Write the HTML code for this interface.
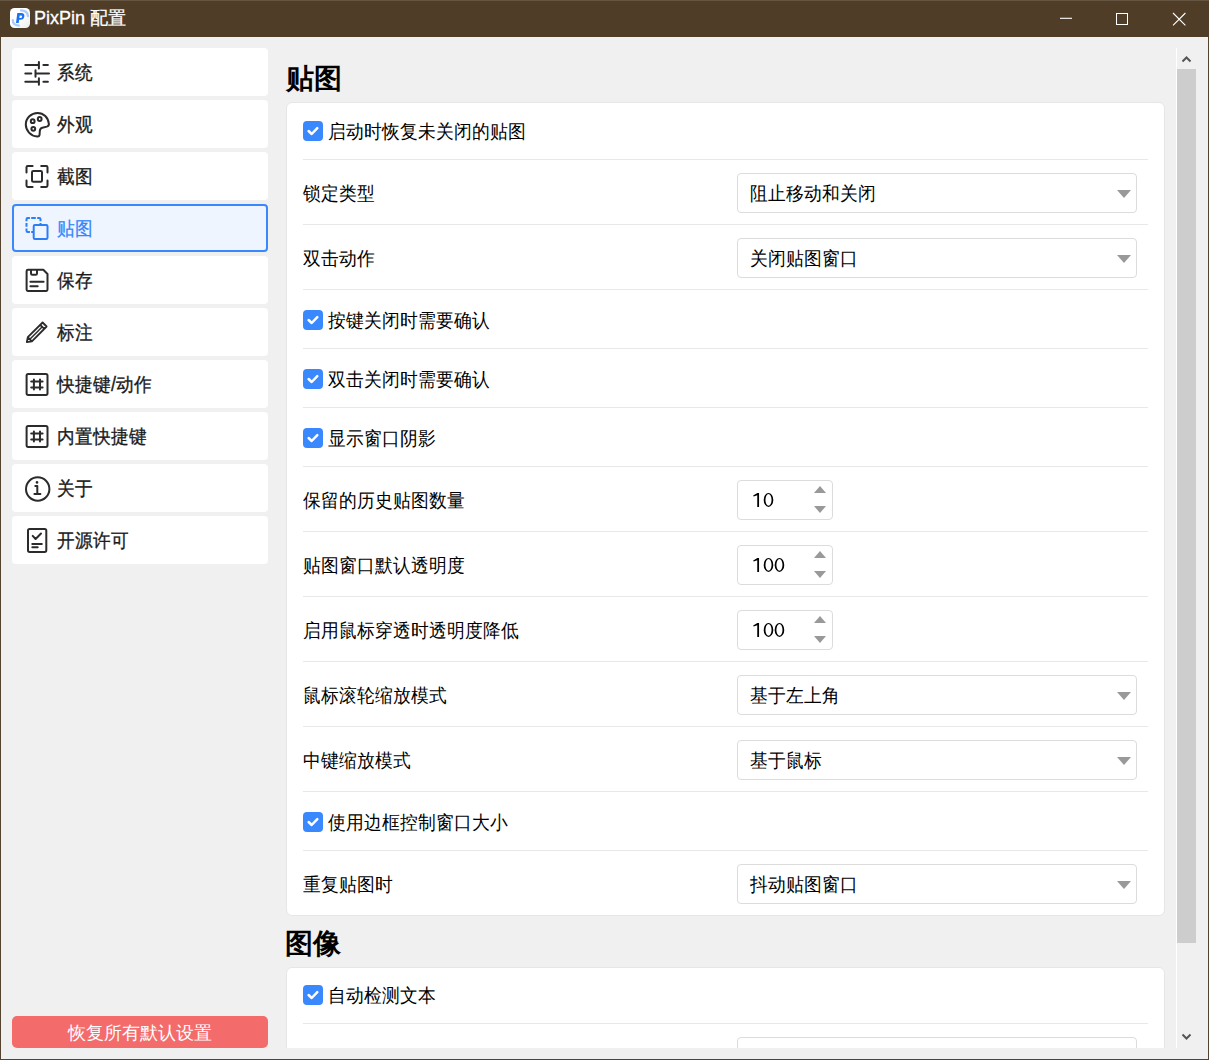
<!DOCTYPE html>
<html><head><meta charset="utf-8">
<style>
*{margin:0;padding:0;box-sizing:border-box}
html,body{width:1209px;height:1060px;overflow:hidden;background:#f0f0f0;font-family:"Liberation Sans",sans-serif;color:#000}
.abs{position:absolute}
.ico{position:absolute;overflow:visible}
#tb{left:0;top:0;width:1209px;height:37px;background:#4f3d27}
#tb .t{left:34px;top:7px;font-size:18px;color:#fff;-webkit-text-stroke:0.3px #fff;line-height:22px;white-space:nowrap}
#bl{left:0;top:37px;width:1px;height:1023px;background:#54432e}
#br{left:1208px;top:37px;width:1px;height:1023px;background:#54432e}
#bb{left:0;top:1059px;width:1209px;height:1px;background:#54432e}
.nav{left:12px;width:256px;height:48px;background:#fff;border-radius:4px}
.nav .tx{position:absolute;left:45px;top:12px;transform:scaleY(1.08);transform-origin:0 4px;font-size:18px;line-height:24px;font-weight:500;color:#1a1a1a;-webkit-text-stroke:0.3px #1a1a1a;white-space:nowrap}
.nav.sel{background:#eef5ff;border:2px solid #3a88fd}
.nav.sel .tx{left:43px;top:10px;color:#3585fb;font-weight:500;-webkit-text-stroke:0.25px #3585fb}
#reset{left:12px;top:1016px;width:256px;height:32px;background:#f46b6b;border-radius:5px;color:#fff;font-size:18px;line-height:34px;text-align:center}
h2{position:absolute;font-size:28px;line-height:32px;font-weight:bold;white-space:nowrap}
.card{position:absolute;left:286px;width:879px;background:#fff;border:1px solid #e6e6e6;border-radius:6px}
.lbl{position:absolute;left:303px;transform:scaleY(1.07);transform-origin:0 13px;font-size:18px;line-height:24px;color:#000;white-space:nowrap}
.cb{position:absolute;left:303px;width:20px;height:20px;background:#3a88fd;border-radius:4px}
.cb svg{position:absolute;left:0;top:0}
.cbl{position:absolute;left:328px;transform:scaleY(1.07);transform-origin:0 13px;font-size:18px;line-height:24px;white-space:nowrap}
.sep{position:absolute;left:303px;width:845px;height:1px;background:#e8e8e8}
.dd{position:absolute;left:737px;width:400px;height:40px;border:1px solid #dcdcdc;border-radius:4px;background:#fff}
.dd .v{position:absolute;left:12px;top:8px;transform:scaleY(1.07);transform-origin:0 13px;font-size:18px;line-height:24px;white-space:nowrap}
.dd .ar{position:absolute;left:379px;top:16px;width:0;height:0;border-left:7px solid transparent;border-right:7px solid transparent;border-top:8px solid #999}
.sp{position:absolute;left:737px;width:96px;height:40px;border:1px solid #dcdcdc;border-radius:4px;background:#fff}
.sp .v{position:absolute;left:14px;top:7px;font-size:20px;line-height:24px}
.sp .up{position:absolute;left:75.5px;top:5px;width:0;height:0;border-left:6.5px solid transparent;border-right:6.5px solid transparent;border-bottom:7px solid #999}
.sp .dn{position:absolute;left:75.5px;top:25px;width:0;height:0;border-left:6.5px solid transparent;border-right:6.5px solid transparent;border-top:7px solid #999}
#sbl{left:1176px;top:48px;width:1px;height:1000px;background:#fff}
#sbt{left:1177px;top:69px;width:19px;height:874px;background:#cdcdcd}
#clip{position:absolute;left:0;top:0;width:1209px;height:1048px;overflow:hidden}
#botband{left:1px;top:1048px;width:1207px;height:11px;background:#f0f0f0}
#tline{left:0;top:0;width:1209px;height:1px;background:#665541}
</style></head><body>
<div id="tb" class="abs">
  <div class="abs t">PixPin 配置</div>
  <svg class="ico" style="left:1055px;top:8px" width="140" height="22" viewBox="0 0 140 22">
    <path d="M5 10.3 H17" stroke="#fff" stroke-width="1.1" fill="none"/>
    <rect x="61.5" y="5.5" width="11" height="11" stroke="#fff" stroke-width="1" fill="none"/>
    <path d="M118 5 L130.4 17.4 M130.4 5 L118 17.4" stroke="#fff" stroke-width="1.1" fill="none"/>
  </svg>
</div>
<svg class="ico" style="left:10px;top:8px" width="20" height="20" viewBox="0 0 20 20">
<defs><linearGradient id="lg" x1="0" y1="0" x2="1" y2="1"><stop offset="0.45" stop-color="#ffffff"/><stop offset="1" stop-color="#ededed"/></linearGradient></defs>
<rect x="0" y="0" width="20" height="20" rx="4.5" fill="url(#lg)"/>
<path d="M11 2.4 Q17.5 2.4 17.9 8" fill="none" stroke="#a9cdfd" stroke-width="2.3" stroke-linecap="round"/>
<path d="M2.8 12.1 Q2.8 17.3 8.8 17.6" fill="none" stroke="#a9cdfd" stroke-width="2.3" stroke-linecap="round"/>
<path d="M6 14.9 L7.3 5.1 H11.3 Q14.9 5.1 14.3 8.6 Q13.7 11.8 10.4 11.8 H9.1 L8.7 14.9 Z M9.7 7.4 L9.35 10 H10.6 Q11.9 10 12.1 8.7 Q12.2 7.4 11 7.4 Z" fill="#1a73f5" fill-rule="evenodd"/>
</svg>
<div id="tline" class="abs"></div><div id="bl" class="abs"></div><div id="br" class="abs"></div><div id="bb" class="abs"></div>

<div class="abs nav" style="top:48px"><div class="tx">系统</div></div>
<svg class="ico" style="left:0px;top:31px" width="60" height="60" viewBox="0 0 60 60"><path d="M25.3 34 H38.9 M38.9 31 V37.4 M43.4 34 H47.9 M25.3 42.4 H31.3 M35.5 39.2 V45.7 M35.5 42.4 H49 M25.3 50.7 H38.9 M38.9 47.2 V53.7 M43.4 50.7 H47.9" fill="none" stroke="#2b2b2b" stroke-width="2" stroke-linecap="round" stroke-linejoin="round"/></svg>
<div class="abs nav" style="top:100px"><div class="tx">外观</div></div>
<svg class="ico" style="left:20px;top:106px" width="36" height="36" viewBox="0 0 36 36"><path d="M17.2 30.4 C10.5 30 5.8 24.5 5.8 18.6 C5.8 12 11.3 6.9 17.6 6.9 C23.6 6.9 28.3 11.4 28.9 18 C29 19.5 28.2 20.2 26.8 20.6 L22.3 21.7 C20.6 22.1 19.9 23.2 19.8 25 L19.6 28.5 C19.5 29.8 18.6 30.5 17.2 30.4 Z" fill="none" stroke="#2b2b2b" stroke-width="2" stroke-linecap="round" stroke-linejoin="round"/><circle cx="12.7" cy="15.2" r="1.9" fill="none" stroke="#2b2b2b" stroke-width="2" stroke-linecap="round" stroke-linejoin="round"/><circle cx="19.7" cy="13" r="1.9" fill="none" stroke="#2b2b2b" stroke-width="2" stroke-linecap="round" stroke-linejoin="round"/><circle cx="13.3" cy="22.8" r="1.9" fill="none" stroke="#2b2b2b" stroke-width="2" stroke-linecap="round" stroke-linejoin="round"/></svg>
<div class="abs nav" style="top:152px"><div class="tx">截图</div></div>
<svg class="ico" style="left:20px;top:158px" width="36" height="36" viewBox="0 0 36 36"><path d="M6.5 14.6 V9.3 Q6.5 8 7.8 8 H12.6 M21.2 8 H26.2 Q27.5 8 27.5 9.3 V14.6 M27.5 22.6 V27.6 Q27.5 28.9 26.2 28.9 H21.2 M12.6 28.9 H7.8 Q6.5 28.9 6.5 27.6 V22.6" fill="none" stroke="#2b2b2b" stroke-width="2" stroke-linecap="round" stroke-linejoin="round"/><rect x="12" y="13" width="10" height="10.8" rx="1.3" fill="none" stroke="#2b2b2b" stroke-width="2" stroke-linecap="round" stroke-linejoin="round"/></svg>
<div class="abs nav sel" style="top:204px"><div class="tx">贴图</div></div>
<svg class="ico" style="left:20px;top:210px" width="36" height="36" viewBox="0 0 36 36"><path d="M6.5 11.2 V9.3 Q6.5 8 7.8 8 H9.9 M11.2 8 H15.8 M17.2 8 H19.2 Q20.5 8 20.5 9.3 V11.2 M6.5 13.1 V16.8 M6.5 18.5 V20.7 Q6.5 22 7.8 22 H9.9 M11.2 22 H13.7 M20.5 13.1 V15" fill="none" stroke="#2a7ff7" stroke-width="2" stroke-linecap="butt" stroke-linejoin="round"/><rect x="13.7" y="15" width="13.8" height="14" rx="1.2" fill="none" stroke="#2a7ff7" stroke-width="2"/></svg>
<div class="abs nav" style="top:256px"><div class="tx">保存</div></div>
<svg class="ico" style="left:20px;top:262px" width="36" height="36" viewBox="0 0 36 36"><path d="M8 7.8 H23.3 L27.5 12 V27.6 Q27.5 28.9 26.2 28.9 H7.9 Q6.6 28.9 6.6 27.6 V9.2 Q6.6 7.8 8 7.8 Z M11 7.8 V11.4 Q11 12.7 12.3 12.7 H15.7 Q17 12.7 17 11.4 V7.8 M10.4 19.7 H23.6 M10.4 24.2 H17.7" fill="none" stroke="#2b2b2b" stroke-width="2" stroke-linecap="round" stroke-linejoin="round"/></svg>
<div class="abs nav" style="top:308px"><div class="tx">标注</div></div>
<svg class="ico" style="left:20px;top:314px" width="36" height="36" viewBox="0 0 36 36"><path d="M6.8 28.2 L7.8 23.2 L22.6 8.5 L26.6 12.5 L11.9 27.3 Z M7.8 23.2 L11.9 27.3 M20.3 10.9 L24.3 14.9" fill="none" stroke="#2b2b2b" stroke-width="1.8" stroke-linecap="round" stroke-linejoin="round"/><path d="M9.85 25.25 L22.3 12.8" stroke="#2b2b2b" stroke-width="1.5" fill="none"/></svg>
<div class="abs nav" style="top:360px"><div class="tx">快捷键/动作</div></div>
<svg class="ico" style="left:20px;top:366px" width="36" height="36" viewBox="0 0 36 36"><rect x="6.6" y="7.9" width="20.9" height="21" rx="1.6" fill="none" stroke="#2b2b2b" stroke-width="2" stroke-linecap="round" stroke-linejoin="round"/><path d="M13.9 13.4 V23.4 M20 13.4 V23.4 M11.2 15.5 H22.6 M11.2 21.4 H22.6" fill="none" stroke="#2b2b2b" stroke-width="2" stroke-linecap="round" stroke-linejoin="round"/></svg>
<div class="abs nav" style="top:412px"><div class="tx">内置快捷键</div></div>
<svg class="ico" style="left:20px;top:418px" width="36" height="36" viewBox="0 0 36 36"><rect x="6.6" y="7.9" width="20.9" height="21" rx="1.6" fill="none" stroke="#2b2b2b" stroke-width="2" stroke-linecap="round" stroke-linejoin="round"/><path d="M13.9 13.4 V23.4 M20 13.4 V23.4 M11.2 15.5 H22.6 M11.2 21.4 H22.6" fill="none" stroke="#2b2b2b" stroke-width="2" stroke-linecap="round" stroke-linejoin="round"/></svg>
<div class="abs nav" style="top:464px"><div class="tx">关于</div></div>
<svg class="ico" style="left:20px;top:470px" width="36" height="36" viewBox="0 0 36 36"><circle cx="17.7" cy="19" r="11.7" fill="none" stroke="#2b2b2b" stroke-width="2" stroke-linecap="round" stroke-linejoin="round"/><circle cx="17" cy="12.4" r="1.3" fill="#2b2b2b"/><path d="M15.3 16 H17.3 V24 M14.4 24 H20.4" fill="none" stroke="#2b2b2b" stroke-width="2" stroke-linecap="round" stroke-linejoin="round"/></svg>
<div class="abs nav" style="top:516px"><div class="tx">开源许可</div></div>
<svg class="ico" style="left:20px;top:522px" width="36" height="36" viewBox="0 0 36 36"><rect x="8" y="7" width="18.3" height="22.9" rx="1.6" fill="none" stroke="#2b2b2b" stroke-width="2" stroke-linecap="round" stroke-linejoin="round"/><path d="M12.7 13.9 L15.6 17 L21 11.5 M12.3 21.9 H21.8 M12.3 25.3 H17.7" fill="none" stroke="#2b2b2b" stroke-width="2" stroke-linecap="round" stroke-linejoin="round"/></svg>
<div id="reset" class="abs">恢复所有默认设置</div>

<div id="clip">
<h2 style="left:286px;top:63px">贴图</h2>
<div class="card" style="top:102px;height:814px"></div>
<h2 style="left:285px;top:928px">图像</h2>
<div class="card" style="top:967px;height:140px"></div>
<div class="cb" style="top:121px"><svg width="20" height="20" viewBox="0 0 20 20"><path d="M5.6 10 L8.7 13 L14.3 7.2" fill="none" stroke="#fff" stroke-width="2.5" stroke-linecap="round" stroke-linejoin="round"/></svg></div>
<div class="cbl" style="top:120px">启动时恢复未关闭的贴图</div>
<div class="lbl" style="top:182px">锁定类型</div>
<div class="dd" style="top:173px"><div class="v">阻止移动和关闭</div><div class="ar"></div></div>
<div class="lbl" style="top:247px">双击动作</div>
<div class="dd" style="top:238px"><div class="v">关闭贴图窗口</div><div class="ar"></div></div>
<div class="cb" style="top:310px"><svg width="20" height="20" viewBox="0 0 20 20"><path d="M5.6 10 L8.7 13 L14.3 7.2" fill="none" stroke="#fff" stroke-width="2.5" stroke-linecap="round" stroke-linejoin="round"/></svg></div>
<div class="cbl" style="top:309px">按键关闭时需要确认</div>
<div class="cb" style="top:369px"><svg width="20" height="20" viewBox="0 0 20 20"><path d="M5.6 10 L8.7 13 L14.3 7.2" fill="none" stroke="#fff" stroke-width="2.5" stroke-linecap="round" stroke-linejoin="round"/></svg></div>
<div class="cbl" style="top:368px">双击关闭时需要确认</div>
<div class="cb" style="top:428px"><svg width="20" height="20" viewBox="0 0 20 20"><path d="M5.6 10 L8.7 13 L14.3 7.2" fill="none" stroke="#fff" stroke-width="2.5" stroke-linecap="round" stroke-linejoin="round"/></svg></div>
<div class="cbl" style="top:427px">显示窗口阴影</div>
<div class="lbl" style="top:489px">保留的历史贴图数量</div>
<div class="sp" style="top:480px"><svg style="position:absolute;left:-1px;top:-1px" width="96" height="40" viewBox="0 0 96 40"><path d="M16.2 15.5 L20.4 13 H22.049999999999997 V26.9 H20.25 V15.2 L16.599999999999998 16.5 Z" fill="#000"/><ellipse cx="31.50" cy="19.95" rx="4.8" ry="6.95" fill="#000"/><ellipse cx="31.50" cy="19.95" rx="3.05" ry="5.85" fill="#fff"/></svg><div class="up"></div><div class="dn"></div></div>
<div class="lbl" style="top:554px">贴图窗口默认透明度</div>
<div class="sp" style="top:545px"><svg style="position:absolute;left:-1px;top:-1px" width="96" height="40" viewBox="0 0 96 40"><path d="M16.2 15.5 L20.4 13 H22.049999999999997 V26.9 H20.25 V15.2 L16.599999999999998 16.5 Z" fill="#000"/><ellipse cx="31.50" cy="19.95" rx="4.8" ry="6.95" fill="#000"/><ellipse cx="31.50" cy="19.95" rx="3.05" ry="5.85" fill="#fff"/><ellipse cx="42.45" cy="19.95" rx="4.8" ry="6.95" fill="#000"/><ellipse cx="42.45" cy="19.95" rx="3.05" ry="5.85" fill="#fff"/></svg><div class="up"></div><div class="dn"></div></div>
<div class="lbl" style="top:619px">启用鼠标穿透时透明度降低</div>
<div class="sp" style="top:610px"><svg style="position:absolute;left:-1px;top:-1px" width="96" height="40" viewBox="0 0 96 40"><path d="M16.2 15.5 L20.4 13 H22.049999999999997 V26.9 H20.25 V15.2 L16.599999999999998 16.5 Z" fill="#000"/><ellipse cx="31.50" cy="19.95" rx="4.8" ry="6.95" fill="#000"/><ellipse cx="31.50" cy="19.95" rx="3.05" ry="5.85" fill="#fff"/><ellipse cx="42.45" cy="19.95" rx="4.8" ry="6.95" fill="#000"/><ellipse cx="42.45" cy="19.95" rx="3.05" ry="5.85" fill="#fff"/></svg><div class="up"></div><div class="dn"></div></div>
<div class="lbl" style="top:684px">鼠标滚轮缩放模式</div>
<div class="dd" style="top:675px"><div class="v">基于左上角</div><div class="ar"></div></div>
<div class="lbl" style="top:749px">中键缩放模式</div>
<div class="dd" style="top:740px"><div class="v">基于鼠标</div><div class="ar"></div></div>
<div class="cb" style="top:812px"><svg width="20" height="20" viewBox="0 0 20 20"><path d="M5.6 10 L8.7 13 L14.3 7.2" fill="none" stroke="#fff" stroke-width="2.5" stroke-linecap="round" stroke-linejoin="round"/></svg></div>
<div class="cbl" style="top:811px">使用边框控制窗口大小</div>
<div class="lbl" style="top:873px">重复贴图时</div>
<div class="dd" style="top:864px"><div class="v">抖动贴图窗口</div><div class="ar"></div></div>
<div class="sep" style="top:159px"></div>
<div class="sep" style="top:224px"></div>
<div class="sep" style="top:289px"></div>
<div class="sep" style="top:348px"></div>
<div class="sep" style="top:407px"></div>
<div class="sep" style="top:466px"></div>
<div class="sep" style="top:531px"></div>
<div class="sep" style="top:596px"></div>
<div class="sep" style="top:661px"></div>
<div class="sep" style="top:726px"></div>
<div class="sep" style="top:791px"></div>
<div class="sep" style="top:850px"></div>
<div class="cb" style="top:985px"><svg width="20" height="20" viewBox="0 0 20 20"><path d="M5.6 10 L8.7 13 L14.3 7.2" fill="none" stroke="#fff" stroke-width="2.5" stroke-linecap="round" stroke-linejoin="round"/></svg></div>
<div class="cbl" style="top:984px">自动检测文本</div>
<div class="dd" style="top:1037px"><div class="v"></div><div class="ar"></div></div>
<div class="sep" style="top:1023px"></div>
</div>
<div id="botband" class="abs"></div>

<div id="sbl" class="abs"></div>
<div id="sbt" class="abs"></div>
<svg class="ico" style="left:1176px;top:48px" width="24" height="1000" viewBox="0 0 24 1000">
  <path d="M6.5 13.5 L10.5 9.5 L14.5 13.5" stroke="#555" stroke-width="2" fill="none"/>
  <path d="M6.5 986.5 L10.5 990.5 L14.5 986.5" stroke="#555" stroke-width="2" fill="none"/>
</svg>
</body></html>
